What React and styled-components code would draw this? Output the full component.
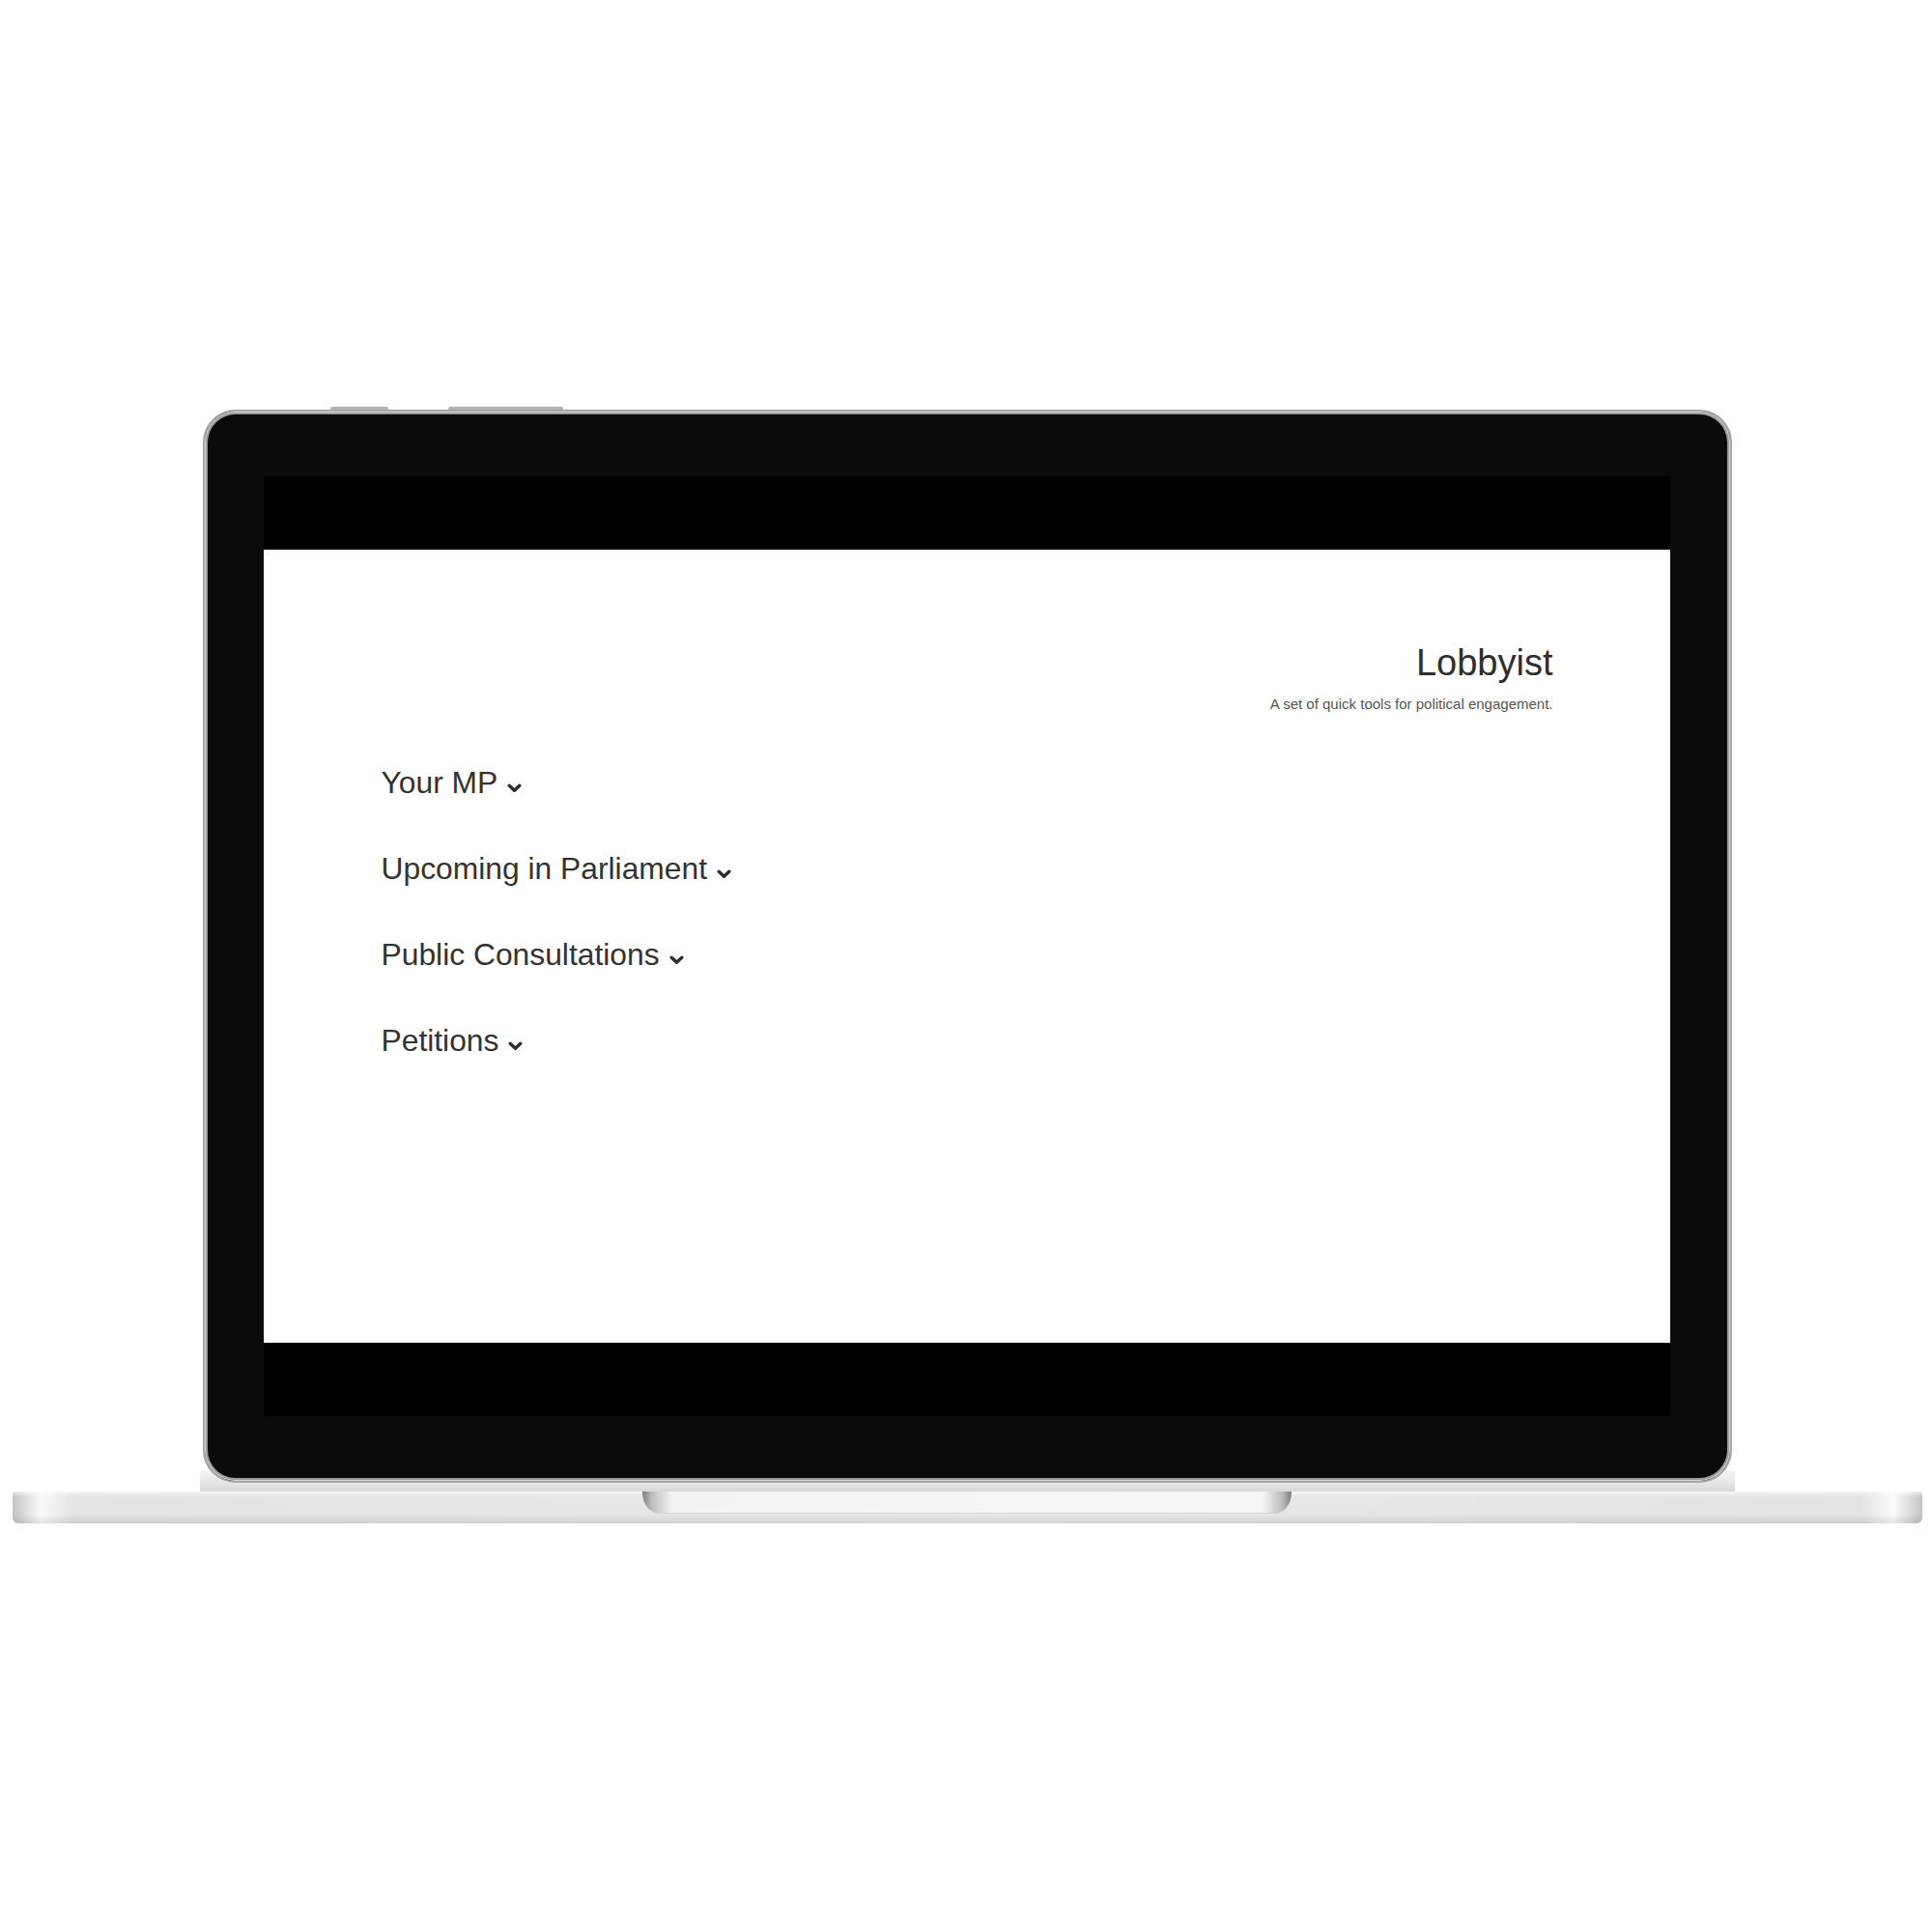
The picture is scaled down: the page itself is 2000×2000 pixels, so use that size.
import React from "react";
import styled, { createGlobalStyle } from "styled-components";

const GlobalStyle = createGlobalStyle`
  html, body {
    margin: 0;
    padding: 0;
    background: #ffffff;
  }
  body {
    font-family: "Liberation Sans", Arial, Helvetica, sans-serif;
  }
`;

const sections = [
  "Your MP",
  "Upcoming in Parliament",
  "Public Consultations",
  "Petitions",
];

function Chevron() {
  return (
    <svg width="15" height="10" viewBox="0 0 15 10" aria-hidden="true">
      <path
        d="M2.2 2.2 L7.5 7.3 L12.8 2.2"
        fill="none"
        stroke="#2e2e2e"
        strokeWidth="3.4"
        strokeLinecap="round"
        strokeLinejoin="round"
      />
    </svg>
  );
}

function App() {
  return (
    <>
      <GlobalStyle />
      <Stage>
        <LidWrap>
          <SideButtons>
            <SideButton $width={60} />
            <SideButton $width={119} />
          </SideButtons>
          <Lid>
            <Screen>
              <Letterbox />
              <Page>
                <Header>
                  <Title>Lobbyist</Title>
                  <Tagline>A set of quick tools for political engagement.</Tagline>
                </Header>
                <Menu>
                  {sections.map((label) => (
                    <MenuItem key={label} type="button">
                      {label}
                      <Chevron />
                    </MenuItem>
                  ))}
                </Menu>
              </Page>
              <Letterbox />
            </Screen>
          </Lid>
        </LidWrap>
        <Hinge />
        <Base>
          <Notch />
        </Base>
      </Stage>
    </>
  );
}

const Stage = styled.div`
  width: 2000px;
  height: 2000px;
  box-sizing: border-box;
  padding: 421px 0 0 2px;
  display: flex;
  flex-direction: column;
  align-items: center;
`;

const LidWrap = styled.div`
  width: 1583px;
  display: flex;
  flex-direction: column;
  position: relative;
  z-index: 1;
`;

const SideButtons = styled.div`
  height: 3px;
  display: flex;
  gap: 62px;
  padding-left: 132px;
`;

const SideButton = styled.div`
  width: ${(p) => p.$width}px;
  height: 3px;
  background: #b4b4b4;
  border-radius: 2px 2px 0 0;
`;

const Lid = styled.div`
  box-sizing: border-box;
  width: 1583px;
  height: 1111px;
  padding: 67px 62px 67px 61px;
  border: 2px solid #a7a7a7;
  border-radius: 34px;
  background: #0a0c0b;
  box-shadow: inset 0 0 0 1px #d6d6d6, inset 0 0 0 3px #9c9c9c;
`;

const Screen = styled.div`
  width: 1456px;
  height: 973px;
  display: flex;
  flex-direction: column;
  background: #000;
`;

const Letterbox = styled.div`
  height: 76px;
  background: #000;
`;

const Page = styled.div`
  height: 821px;
  box-sizing: border-box;
  background: #ffffff;
  padding: 95px 121px 0 122px;
  color: #333;
`;

const Header = styled.header`
  text-align: right;
`;

const Title = styled.h1`
  margin: 0;
  font-size: 38px;
  font-weight: 400;
  line-height: 1.2;
  color: #2e2e2e;
`;

const Tagline = styled.p`
  margin: 10px 0 0;
  font-size: 15px;
  line-height: 18px;
  color: #555;
`;

const Menu = styled.nav`
  margin-top: 54px;
  display: flex;
  flex-direction: column;
  align-items: flex-start;
  gap: 53px;
`;

const MenuItem = styled.button`
  display: inline-flex;
  align-items: baseline;
  gap: 10px;
  padding: 0;
  border: 0;
  background: none;
  font-family: "Liberation Sans", Arial, Helvetica, sans-serif;
  font-size: 31.8px;
  line-height: 36px;
  color: #333;
  cursor: pointer;

  svg {
    flex: none;
  }
`;

const Hinge = styled.div`
  width: 1589px;
  height: 22px;
  margin-top: -13px;
  border-radius: 4px 4px 0 0;
  background: linear-gradient(180deg, #f4f4f4 0, #e6e6e6 60%, #d8d8d8 100%);
`;

const Base = styled.div`
  width: 1977px;
  height: 33px;
  display: flex;
  justify-content: center;
  border-radius: 2px 2px 6px 6px;
  background:
    linear-gradient(180deg, rgba(255, 255, 255, 0.6) 0, rgba(255, 255, 255, 0) 18%, rgba(0, 0, 0, 0) 70%, rgba(0, 0, 0, 0.09) 100%),
    linear-gradient(90deg, #c4c4c4 0, #dadada 0.6%, #fafafa 1.5%, #e3e3e3 3.2%, #e9e9e9 50%, #e3e3e3 96.8%, #fafafa 98.5%, #dadada 99.4%, #c4c4c4 100%);
`;

const Notch = styled.div`
  width: 672px;
  height: 22px;
  border-radius: 0 0 16px 16px / 0 0 22px 22px;
  background: linear-gradient(90deg, #7c7c7c 0, #bcbcbc 1.4%, #f3f3f3 4.5%, #f6f6f6 95.5%, #bcbcbc 98.6%, #7c7c7c 100%);
  box-shadow: 0 1px 0 #d4d4d4;
`;

export default App;
